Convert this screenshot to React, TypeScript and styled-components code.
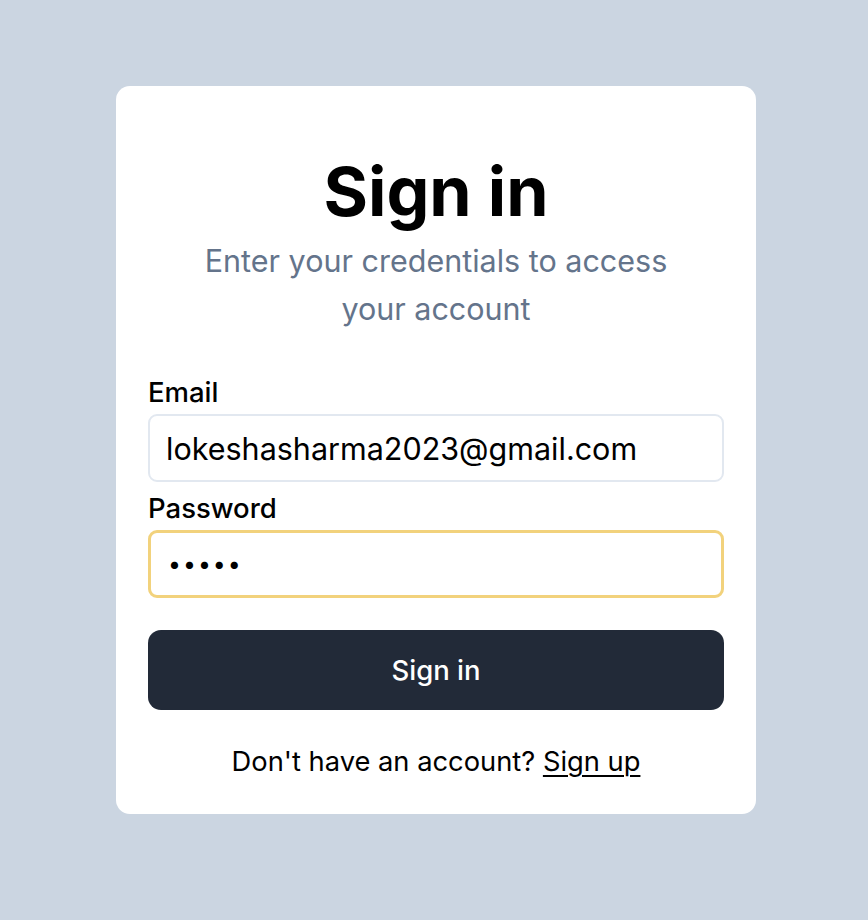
import React from "react";
import styled, { createGlobalStyle } from "styled-components";

const Global = createGlobalStyle`
  html, body { margin: 0; padding: 0; }
  body {
    background: #cbd5e1;
    font-family: Inter, "Noto Sans", sans-serif;
    color: #000;
  }
  * { box-sizing: border-box; }
`;

const Page = styled.div`
  min-height: 920px;
  display: flex;
  justify-content: center;
  align-items: flex-start;
  padding: 86px 0 0 4px;
`;

const Card = styled.form`
  width: 640px;
  background: #fff;
  border-radius: 14px;
  padding: 71px 32px 36px;
  display: flex;
  flex-direction: column;
`;

const Title = styled.h1`
  margin: 0;
  font-size: 68px;
  line-height: 68px;
  font-weight: 700;
  text-align: center;
`;

const Subtitle = styled.p`
  margin: 12px auto 0;
  max-width: 490px;
  font-size: 30.5px;
  line-height: 48px;
  color: #64748b;
  text-align: center;
`;

const Field = styled.div<{ $first?: boolean }>`
  display: flex;
  flex-direction: column;
  margin-top: ${(p) => (p.$first ? "43px" : "10px")};
`;

const Label = styled.label`
  font-size: 27.5px;
  line-height: 32px;
  font-weight: 500;
  margin-bottom: 6px;
`;

const Input = styled.input<{ $focused?: boolean }>`
  height: 68px;
  width: 100%;
  border: ${(p) => (p.$focused ? "3px solid #f2d27c" : "2px solid #e2e8f0")};
  border-radius: 9px;
  padding: 0 ${(p) => (p.$focused ? "17px" : "16px")};
  font-family: Inter, "Noto Sans", sans-serif;
  font-size: ${(p) => (p.$focused ? "23px" : "30.5px")};
  color: #000;
  outline: none;
  background: #fff;
  letter-spacing: ${(p) => (p.$focused ? "2px" : "0")};
`;

const Button = styled.button`
  margin-top: 32px;
  height: 80px;
  width: 100%;
  border: none;
  border-radius: 13px;
  background: #222a38;
  color: #fff;
  font-family: Inter, "Noto Sans", sans-serif;
  font-size: 27.5px;
  font-weight: 500;
  cursor: pointer;
`;

const Footer = styled.p`
  margin: 36px 0 0;
  text-align: center;
  font-size: 27.3px;
  line-height: 32px;
`;

const Link = styled.a`
  color: #000;
  text-decoration: underline;
  text-underline-offset: 4px;
  text-decoration-thickness: 2px;
`;

export default function App() {
  return (
    <>
      <Global />
      <Page>
        <Card onSubmit={(e) => e.preventDefault()}>
          <Title>Sign in</Title>
          <Subtitle>Enter your credentials to access your account</Subtitle>
          <Field $first>
            <Label htmlFor="email">Email</Label>
            <Input id="email" type="email" defaultValue="lokeshasharma2023@gmail.com" />
          </Field>
          <Field>
            <Label htmlFor="password">Password</Label>
            <Input id="password" type="password" defaultValue="12345" $focused />
          </Field>
          <Button type="submit">Sign in</Button>
          <Footer>
            Don't have an account? <Link href="#">Sign up</Link>
          </Footer>
        </Card>
      </Page>
    </>
  );
}
